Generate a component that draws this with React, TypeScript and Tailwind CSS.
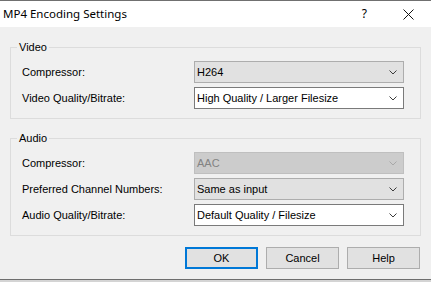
import { ReactNode } from 'react';

const ui = { fontFamily: '"Liberation Sans", Arial, sans-serif' };
const title = { fontFamily: '"Noto Sans", "Open Sans", sans-serif' };

function Chevron({ muted }: { muted?: boolean }) {
  return (
    <svg width="8" height="5" viewBox="0 0 8 5" className="shrink-0">
      <path d="M0.5 0.5 L4 4 L7.5 0.5" fill="none" stroke={muted ? '#a8a8a8' : '#3c3c3c'} strokeWidth="1" />
    </svg>
  );
}

type Kind = 'gray' | 'white' | 'disabled';

function Select({ value, kind }: { value: string; kind: Kind }) {
  const box =
    kind === 'white'
      ? 'bg-white border-[#7a7a7a] text-black'
      : kind === 'gray'
        ? 'bg-[#e1e1e1] border-[#adadad] text-black'
        : 'bg-[#cccccc] border-[#bfbfbf] text-[#838383]';
  return (
    <div className={`flex h-[22px] w-[210px] items-center justify-between border pl-[2px] pr-[6px] ${box}`}>
      <span className="text-[11px] leading-none">{value}</span>
      <Chevron muted={kind === 'disabled'} />
    </div>
  );
}

function Row({ label, children }: { label: string; children: ReactNode }) {
  return (
    <div className="flex items-center">
      <span className="w-[172px] text-[11px] leading-none text-black">{label}</span>
      {children}
    </div>
  );
}

function Group({ name, children }: { name: string; children: ReactNode }) {
  return (
    <div className="relative mx-[10px] border border-[#dcdcdc] pb-[9px] pl-[11px] pt-[13px]">
      <span className="absolute left-[6px] top-[-7px] bg-[#f0f0f0] px-[2px] text-[11px] leading-[13px] text-black">{name}</span>
      <div className="flex flex-col gap-[4px]">{children}</div>
    </div>
  );
}

function Button({ label, primary }: { label: string; primary?: boolean }) {
  return (
    <button
      type="button"
      className={`flex h-[22px] w-[73px] items-center justify-center bg-[#e1e1e1] text-[11px] leading-none text-black ${
        primary ? 'border-2 border-[#0078d7]' : 'border border-[#adadad]'
      }`}
    >
      {label}
    </button>
  );
}

export default function App() {
  return (
    <div className="flex h-[282px] w-[431px] flex-col overflow-hidden bg-[#f0f0f0]" style={ui}>
      <div className="flex h-[27px] items-center border-t border-[#707070] bg-white pr-[17px]">
        <span className="ml-[3px] text-[11.5px] text-black" style={title}>MP4 Encoding Settings</span>
        <span className="ml-auto mr-[36px] text-[12px] text-black" style={title}>?</span>
        <svg width="11" height="11" viewBox="0 0 11 11">
          <path d="M0.5 0.5 L10.5 10.5 M10.5 0.5 L0.5 10.5" stroke="#111" strokeWidth="1" />
        </svg>
      </div>

      <div className="mt-[20px] flex flex-col gap-[19px]">
        <Group name="Video">
          <Row label="Compressor:">
            <Select value="H264" kind="gray" />
          </Row>
          <Row label="Video Quality/Bitrate:">
            <Select value="High Quality / Larger Filesize" kind="white" />
          </Row>
        </Group>

        <Group name="Audio">
          <Row label="Compressor:">
            <Select value="AAC" kind="disabled" />
          </Row>
          <Row label="Preferred Channel Numbers:">
            <Select value="Same as input" kind="gray" />
          </Row>
          <Row label="Audio Quality/Bitrate:">
            <Select value="Default Quality / Filesize" kind="white" />
          </Row>
        </Group>
      </div>

      <div className="mt-[11px] flex justify-end gap-[8px] pr-[11px]">
        <Button label="OK" primary />
        <Button label="Cancel" />
        <Button label="Help" />
      </div>

      <div className="mt-auto h-[3px] border-t border-[#6e6e6e] bg-[#d4d4d4]" />
    </div>
  );
}
